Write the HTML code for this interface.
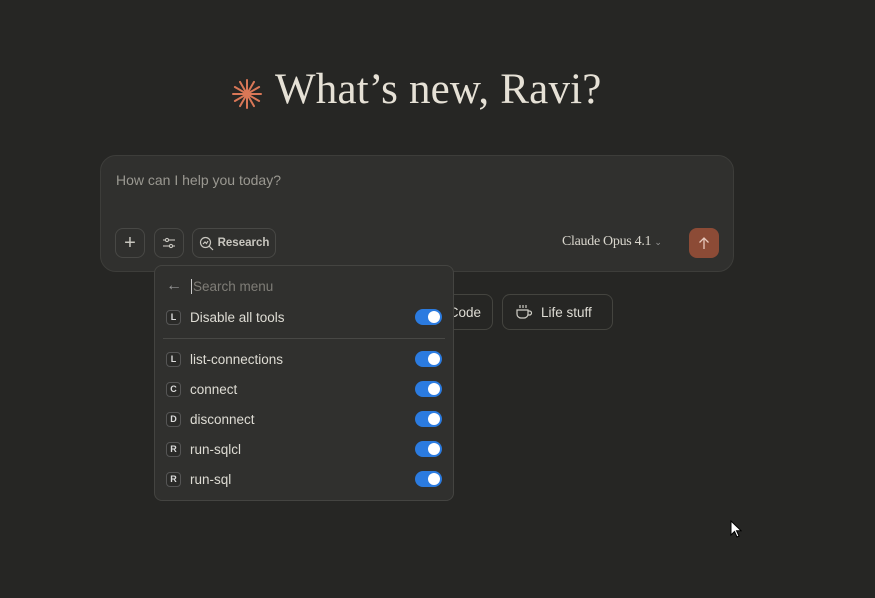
<!DOCTYPE html>
<html><head><style>
body{margin:0;width:875px;height:598px;background:#262624;font-family:"Liberation Sans",sans-serif;position:relative;overflow:hidden;color:#e8e6de}
.abs{position:absolute}
.title{left:275px;top:65px;font-family:"Liberation Serif",serif;font-size:43px;color:#e6e1d6;white-space:nowrap;letter-spacing:0.2px}
.box{left:100px;top:155px;width:634px;height:117px;background:#30302e;border:1px solid #3d3d3a;border-radius:16px;box-sizing:border-box}
.btn{border:1px solid #484845;border-radius:8px;height:30px;box-sizing:border-box;display:flex;align-items:center;justify-content:center;color:#c8c6bf;font-size:12px}
.menu{left:154px;top:265px;width:300px;height:236px;background:#30302e;border:1px solid #444441;border-radius:8px;box-sizing:border-box}
.row{position:absolute;left:11px;right:11px;height:20px;display:flex;align-items:center;font-size:13.5px;color:#dedcd4}
.badge{width:15px;height:15px;border:1px solid #555;border-radius:4px;font-size:9px;font-weight:bold;display:flex;align-items:center;justify-content:center;margin-right:9px;color:#ddd;box-sizing:border-box;background:#2a2a28}
.tg{position:absolute;right:0;width:27px;height:16px;border-radius:8px;background:#2b7be0}
.tg:after{content:"";position:absolute;right:2px;top:2px;width:12px;height:12px;border-radius:50%;background:#fff}
.chip{top:294px;height:36px;border:1px solid #44443f;border-radius:8px;box-sizing:border-box;font-size:13.5px;color:#dedcd4;display:flex;align-items:center}
</style></head><body>
<svg class="abs" style="left:231px;top:78px" width="32" height="32" viewBox="-16 -16 32 32"><g stroke="#d97757" stroke-width="2" stroke-linecap="round">
<line x1="0" y1="-14" x2="0" y2="14"/><line x1="-14" y1="0" x2="14" y2="0"/><line x1="-7" y1="-12.1" x2="7" y2="12.1"/><line x1="7" y1="-12.1" x2="-7" y2="12.1"/><line x1="-12.1" y1="-7" x2="12.1" y2="7"/><line x1="-12.1" y1="7" x2="12.1" y2="-7"/></g></svg>
<div class="abs title">What’s new, Ravi?</div>
<div class="abs box"></div>
<div class="abs" style="left:116px;top:172px;font-size:14px;color:#9a9891">How can I help you today?</div>
<div class="abs btn" style="left:115px;top:228px;width:30px;font-size:20px;font-weight:300">+</div>
<div class="abs btn" style="left:154px;top:228px;width:30px"><svg width="14" height="14" viewBox="0 0 14 14" stroke="#c8c6bf" fill="none" stroke-width="1.1"><line x1="1" y1="4" x2="13" y2="4"/><line x1="1" y1="10" x2="13" y2="10"/><circle cx="5" cy="4" r="1.6" fill="#30302e"/><circle cx="9" cy="10" r="1.6" fill="#30302e"/></svg></div>
<div class="abs btn" style="left:192px;top:228px;width:84px;font-weight:bold;font-size:11.5px"><svg width="15" height="15" viewBox="0 0 15 15" fill="none" stroke="#c8c6bf" stroke-width="1.2" style="margin-right:4px"><circle cx="6.5" cy="6.5" r="5"/><line x1="10" y1="10" x2="14" y2="14"/><polyline points="4,8 6,6 7.5,7.5 9,5"/></svg>Research</div>
<div class="abs" style="left:562px;top:234px;font-family:'Liberation Serif',serif;font-size:14px;color:#d8d5cc;letter-spacing:-0.3px">Claude Opus 4.1 <span style="font-size:9px;color:#999">&#8964;</span></div>
<div class="abs" style="left:689px;top:228px;width:30px;height:30px;border-radius:8px;background:#8c4b36;display:flex;align-items:center;justify-content:center"><svg width="12" height="13" viewBox="0 0 12 13" stroke="#e8c9bd" fill="none" stroke-width="1.3"><line x1="6" y1="1" x2="6" y2="12"/><polyline points="1.5,5.5 6,1 10.5,5.5"/></svg></div>
<div class="abs chip" style="left:400px;width:93px;justify-content:flex-end;padding-right:11px">Code</div>
<div class="abs chip" style="left:502px;width:111px;padding-left:12px"><svg width="18" height="16" viewBox="0 0 18 16" fill="none" stroke="#d0cec6" stroke-width="1.2"><path d="M2 6h11v4a4 4 0 0 1-4 4H6a4 4 0 0 1-4-4z"/><path d="M13 7h1.5a2 2 0 0 1 0 4H13"/><path d="M5 1v3M8 1v3M11 1v3"/></svg><span style="margin-left:8px">Life stuff</span></div>
<div class="abs menu">
<div class="row" style="top:10px;color:#7f7d77"><span style="font-size:16px;margin-right:9px;color:#999">&#8592;</span><span style="border-left:1px solid #ccc;padding-left:1px">Search menu</span></div>
<div class="row" style="top:41px"><div class="badge">L</div>Disable all tools<div class="tg"></div></div>
<div class="abs" style="left:8px;right:8px;top:72px;height:1px;background:#484845"></div>
<div class="row" style="top:83px"><div class="badge">L</div>list-connections<div class="tg"></div></div>
<div class="row" style="top:113px"><div class="badge">C</div>connect<div class="tg"></div></div>
<div class="row" style="top:143px"><div class="badge">D</div>disconnect<div class="tg"></div></div>
<div class="row" style="top:173px"><div class="badge">R</div>run-sqlcl<div class="tg"></div></div>
<div class="row" style="top:203px"><div class="badge">R</div>run-sql<div class="tg"></div></div>
</div>
<svg class="abs" style="left:730px;top:520px" width="12" height="18" viewBox="0 0 12 18"><path d="M1 1v14l3.5-3.5 2.5 5.5 2-1-2.5-5.3H11z" fill="#fff" stroke="#000" stroke-width="1"/></svg>
</body></html>
